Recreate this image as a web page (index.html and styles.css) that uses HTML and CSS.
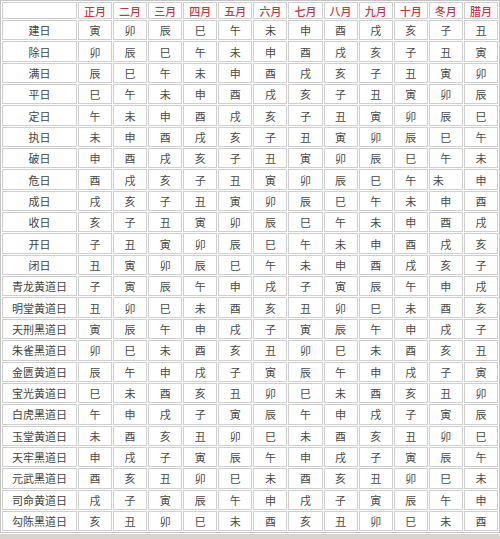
FILE: index.html
```html
<!DOCTYPE html>
<html lang="zh">
<head>
<meta charset="utf-8">
<title>建除十二神 黄道黑道</title>
<link rel="stylesheet" href="styles.css">
</head>
<body>
<table class="cal">
<thead>
<tr><th class="lbl"></th><th>正月</th><th>二月</th><th>三月</th><th>四月</th><th>五月</th><th>六月</th><th>七月</th><th>八月</th><th>九月</th><th>十月</th><th>冬月</th><th>腊月</th></tr>
</thead>
<tbody>
<tr><td class="lbl">建日</td><td>寅</td><td>卯</td><td>辰</td><td>巳</td><td>午</td><td>未</td><td>申</td><td>酉</td><td>戌</td><td>亥</td><td>子</td><td>丑</td></tr>
<tr><td class="lbl">除日</td><td>卯</td><td>辰</td><td>巳</td><td>午</td><td>未</td><td>申</td><td>酉</td><td>戌</td><td>亥</td><td>子</td><td>丑</td><td>寅</td></tr>
<tr><td class="lbl">满日</td><td>辰</td><td>巳</td><td>午</td><td>未</td><td>申</td><td>酉</td><td>戌</td><td>亥</td><td>子</td><td>丑</td><td>寅</td><td>卯</td></tr>
<tr><td class="lbl">平日</td><td>巳</td><td>午</td><td>未</td><td>申</td><td>酉</td><td>戌</td><td>亥</td><td>子</td><td>丑</td><td>寅</td><td>卯</td><td>辰</td></tr>
<tr><td class="lbl">定日</td><td>午</td><td>未</td><td>申</td><td>酉</td><td>戌</td><td>亥</td><td>子</td><td>丑</td><td>寅</td><td>卯</td><td>辰</td><td>巳</td></tr>
<tr><td class="lbl">执日</td><td>未</td><td>申</td><td>酉</td><td>戌</td><td>亥</td><td>子</td><td>丑</td><td>寅</td><td>卯</td><td>辰</td><td>巳</td><td>午</td></tr>
<tr><td class="lbl">破日</td><td>申</td><td>酉</td><td>戌</td><td>亥</td><td>子</td><td>丑</td><td>寅</td><td>卯</td><td>辰</td><td>巳</td><td>午</td><td>未</td></tr>
<tr><td class="lbl">危日</td><td>酉</td><td>戌</td><td>亥</td><td>子</td><td>丑</td><td>寅</td><td>卯</td><td>辰</td><td>巳</td><td>午</td><td class="left">未</td><td>申</td></tr>
<tr><td class="lbl">成日</td><td>戌</td><td>亥</td><td>子</td><td>丑</td><td>寅</td><td>卯</td><td>辰</td><td>巳</td><td>午</td><td>未</td><td>申</td><td>酉</td></tr>
<tr><td class="lbl">收日</td><td>亥</td><td>子</td><td>丑</td><td>寅</td><td>卯</td><td>辰</td><td>巳</td><td>午</td><td>未</td><td>申</td><td>酉</td><td>戌</td></tr>
<tr><td class="lbl">开日</td><td>子</td><td>丑</td><td>寅</td><td>卯</td><td>辰</td><td>巳</td><td>午</td><td>未</td><td>申</td><td>酉</td><td>戌</td><td>亥</td></tr>
<tr><td class="lbl">闭日</td><td>丑</td><td>寅</td><td>卯</td><td>辰</td><td>巳</td><td>午</td><td>未</td><td>申</td><td>酉</td><td>戌</td><td>亥</td><td>子</td></tr>
<tr><td class="lbl">青龙黄道日</td><td>子</td><td>寅</td><td>辰</td><td>午</td><td>申</td><td>戌</td><td>子</td><td>寅</td><td>辰</td><td>午</td><td>申</td><td>戌</td></tr>
<tr><td class="lbl">明堂黄道日</td><td>丑</td><td>卯</td><td>巳</td><td>未</td><td>酉</td><td>亥</td><td>丑</td><td>卯</td><td>巳</td><td>未</td><td>酉</td><td>亥</td></tr>
<tr><td class="lbl">天刑黑道日</td><td>寅</td><td>辰</td><td>午</td><td>申</td><td>戌</td><td>子</td><td>寅</td><td>辰</td><td>午</td><td>申</td><td>戌</td><td>子</td></tr>
<tr><td class="lbl">朱雀黑道日</td><td>卯</td><td>巳</td><td>未</td><td>酉</td><td>亥</td><td>丑</td><td>卯</td><td>巳</td><td>未</td><td>酉</td><td>亥</td><td>丑</td></tr>
<tr><td class="lbl">金匮黄道日</td><td>辰</td><td>午</td><td>申</td><td>戌</td><td>子</td><td>寅</td><td>辰</td><td>午</td><td>申</td><td>戌</td><td>子</td><td>寅</td></tr>
<tr><td class="lbl">宝光黄道日</td><td>巳</td><td>未</td><td>酉</td><td>亥</td><td>丑</td><td>卯</td><td>巳</td><td>未</td><td>酉</td><td>亥</td><td>丑</td><td>卯</td></tr>
<tr><td class="lbl">白虎黑道日</td><td>午</td><td>申</td><td>戌</td><td>子</td><td>寅</td><td>辰</td><td>午</td><td>申</td><td>戌</td><td>子</td><td>寅</td><td>辰</td></tr>
<tr><td class="lbl">玉堂黄道日</td><td>未</td><td>酉</td><td>亥</td><td>丑</td><td>卯</td><td>巳</td><td>未</td><td>酉</td><td>亥</td><td>丑</td><td>卯</td><td>巳</td></tr>
<tr><td class="lbl">天牢黑道日</td><td>申</td><td>戌</td><td>子</td><td>寅</td><td>辰</td><td>午</td><td>申</td><td>戌</td><td>子</td><td>寅</td><td>辰</td><td>午</td></tr>
<tr><td class="lbl">元武黑道日</td><td>酉</td><td>亥</td><td>丑</td><td>卯</td><td>巳</td><td>未</td><td>酉</td><td>亥</td><td>丑</td><td>卯</td><td>巳</td><td>未</td></tr>
<tr><td class="lbl">司命黄道日</td><td>戌</td><td>子</td><td>寅</td><td>辰</td><td>午</td><td>申</td><td>戌</td><td>子</td><td>寅</td><td>辰</td><td>午</td><td>申</td></tr>
<tr><td class="lbl">勾陈黑道日</td><td>亥</td><td>丑</td><td>卯</td><td>巳</td><td>未</td><td>酉</td><td>亥</td><td>丑</td><td>卯</td><td>巳</td><td>未</td><td>酉</td></tr>
</tbody>
</table>
<div class="foot"></div>
</body>
</html>
```
FILE: styles.css
```css
html, body {
  margin: 0;
  padding: 0;
  background: #ffffff;
}

body {
  font-family: "Noto Sans CJK SC", "Noto Sans", sans-serif;
  font-size: 11px;
  color: #4a4a4a;
}

.cal {
  width: 500px;
  table-layout: fixed;
  border-collapse: separate;
  border-spacing: 1px;
  border: 1px solid #c4c4c4;
}

.cal th,
.cal td {
  padding: 0;
  border: 1px solid #cfcfcf;
  text-align: center;
  vertical-align: middle;
  line-height: 14px;
  overflow: hidden;
  white-space: nowrap;
}

.cal th {
  height: 15px;
  color: #cc3340;
  font-weight: 500;
  font-size: 11px;
}

.cal td {
  height: 18.35px;
}

.cal .lbl {
  width: 73px;
  color: #444;
}

.cal td.left {
  text-align: left;
  padding-left: 3px;
}

.foot {
  margin-top: 1px;
  height: 8px;
  background: #d8d5cf;
}
```
